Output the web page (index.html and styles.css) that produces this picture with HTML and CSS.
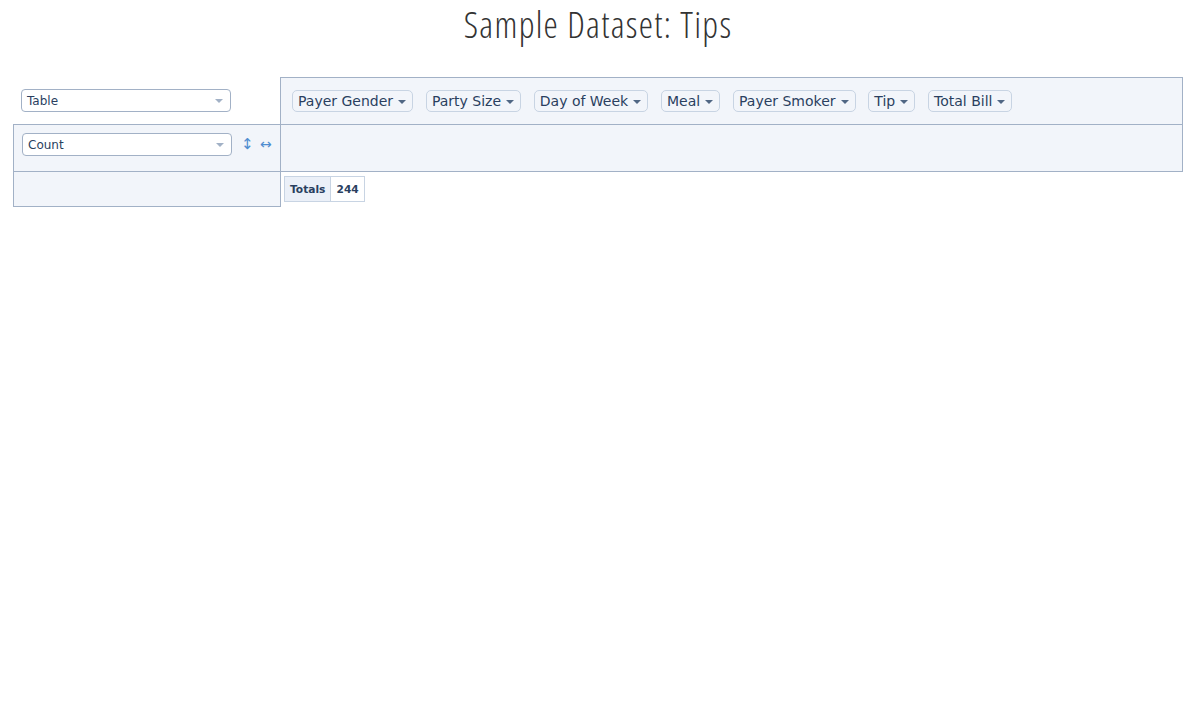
FILE: index.html
```html
<!DOCTYPE html>
<html>
<head>
<meta charset="utf-8">
<link rel="stylesheet" href="styles.css">
</head>
<body>
<h1 class="title">Sample Dataset: Tips</h1>
<div class="pvt-ui">
  <div class="cell renderer-cell">
    <div class="dropdown"><span class="dd-text">Table</span><span class="dd-caret"></span></div>
  </div>
  <div class="cell axis unused">
    <span class="attr">Payer Gender<span class="caret"></span></span>
    <span class="attr">Party Size<span class="caret"></span></span>
    <span class="attr">Day of Week<span class="caret"></span></span>
    <span class="attr">Meal<span class="caret"></span></span>
    <span class="attr">Payer Smoker<span class="caret"></span></span>
    <span class="attr">Tip<span class="caret"></span></span>
    <span class="attr">Total Bill<span class="caret"></span></span>
  </div>
  <div class="cell axis vals">
    <div class="dropdown"><span class="dd-text">Count</span><span class="dd-caret"></span></div>
    <span class="sorter sorter-v">↕</span>
    <span class="sorter">↔</span>
  </div>
  <div class="cell axis cols"></div>
  <div class="cell axis rows"></div>
  <div class="cell output">
    <table class="pvt-table">
      <tr><th class="total-label">Totals</th><td class="grand-total">244</td></tr>
    </table>
  </div>
</div>
</body>
</html>
```
FILE: styles.css
```css
html, body {
  margin: 0;
  padding: 0;
  background: #fff;
}
body {
  padding: 0 19px 0 13px;
}
.title {
  margin: 0;
  padding-top: 5px;
  height: 77px;
  box-sizing: border-box;
  text-align: center;
  font-family: "Open Sans", sans-serif;
  font-weight: 300;
  font-stretch: condensed;
  font-size: 36px;
  letter-spacing: 1.3px;
  color: #333;
  line-height: 40px;
}
.pvt-ui {
  display: grid;
  grid-template-columns: 267px 1fr;
  grid-template-rows: 47px 48px 35px;
  color: #2a3f5f;
  font-family: "DejaVu Sans", Verdana, sans-serif;
  width: 1170px;
}
.cell {
  box-sizing: border-box;
  padding: 5px 7px;
  display: flex;
  align-items: center;
}
.axis {
  background: #f2f5fa;
  border: 0 solid #a2b1c6;
}
.unused {
  border-width: 1px 1px 0 1px;
  padding-left: 11px;
  gap: 12.8px;
}
.vals {
  border-width: 1px 0 1px 1px;
  align-items: flex-start;
  padding: 8px 7px 0 8px;
}
.cols {
  border-width: 1px;
}
.rows {
  border-width: 0 0 1px 1px;
}
.output {
  align-items: flex-start;
  border-left: 1px solid #a2b1c6;
  padding: 4px 3px;
}
.renderer-cell {
  padding-left: 8px;
}
.dropdown {
  position: relative;
  flex-shrink: 0;
  width: 210px;
  height: 23px;
  box-sizing: border-box;
  border: 1px solid #a2b1c6;
  border-radius: 4px;
  background: #fff;
  font-size: 12px;
  display: flex;
  align-items: center;
  padding-left: 5px;
}
.dd-caret {
  position: absolute;
  right: 7px;
  top: 9px;
  width: 0;
  height: 0;
  border-left: 4px solid transparent;
  border-right: 4px solid transparent;
  border-top: 4px solid #a2b1c6;
}
.vals .dropdown {
  margin-right: 9px;
}
.sorter {
  flex-shrink: 0;
  font-size: 14px;
  color: #4f8dd0;
  width: 19px;
  line-height: 23px;
}
.sorter-v {
  font-size: 15px;
}
.attr {
  display: inline-flex;
  align-items: center;
  padding: 2px 5px;
  white-space: nowrap;
  background: #f2f5fa;
  border: 1px solid #c8d4e3;
  border-radius: 5px;
  font-size: 14px;
  line-height: 16px;
}
.caret {
  display: inline-block;
  margin-left: 5px;
  margin-right: 1px;
  width: 0;
  height: 0;
  border-left: 4px solid transparent;
  border-right: 4px solid transparent;
  border-top: 4px solid #506784;
  position: relative;
  top: 1px;
}
.pvt-table {
  border-collapse: collapse;
  font-size: 8pt;
  font-family: "DejaVu Sans", Verdana, sans-serif;
}
.pvt-table th, .pvt-table td {
  border: 1px solid #c8d4e3;
  padding: 6px 5px 5px;
  font-weight: bold;
  color: #2a3f5f;
}
.pvt-table th {
  background: #ebf0f8;
}
.pvt-table td {
  background: #fff;
}
```
